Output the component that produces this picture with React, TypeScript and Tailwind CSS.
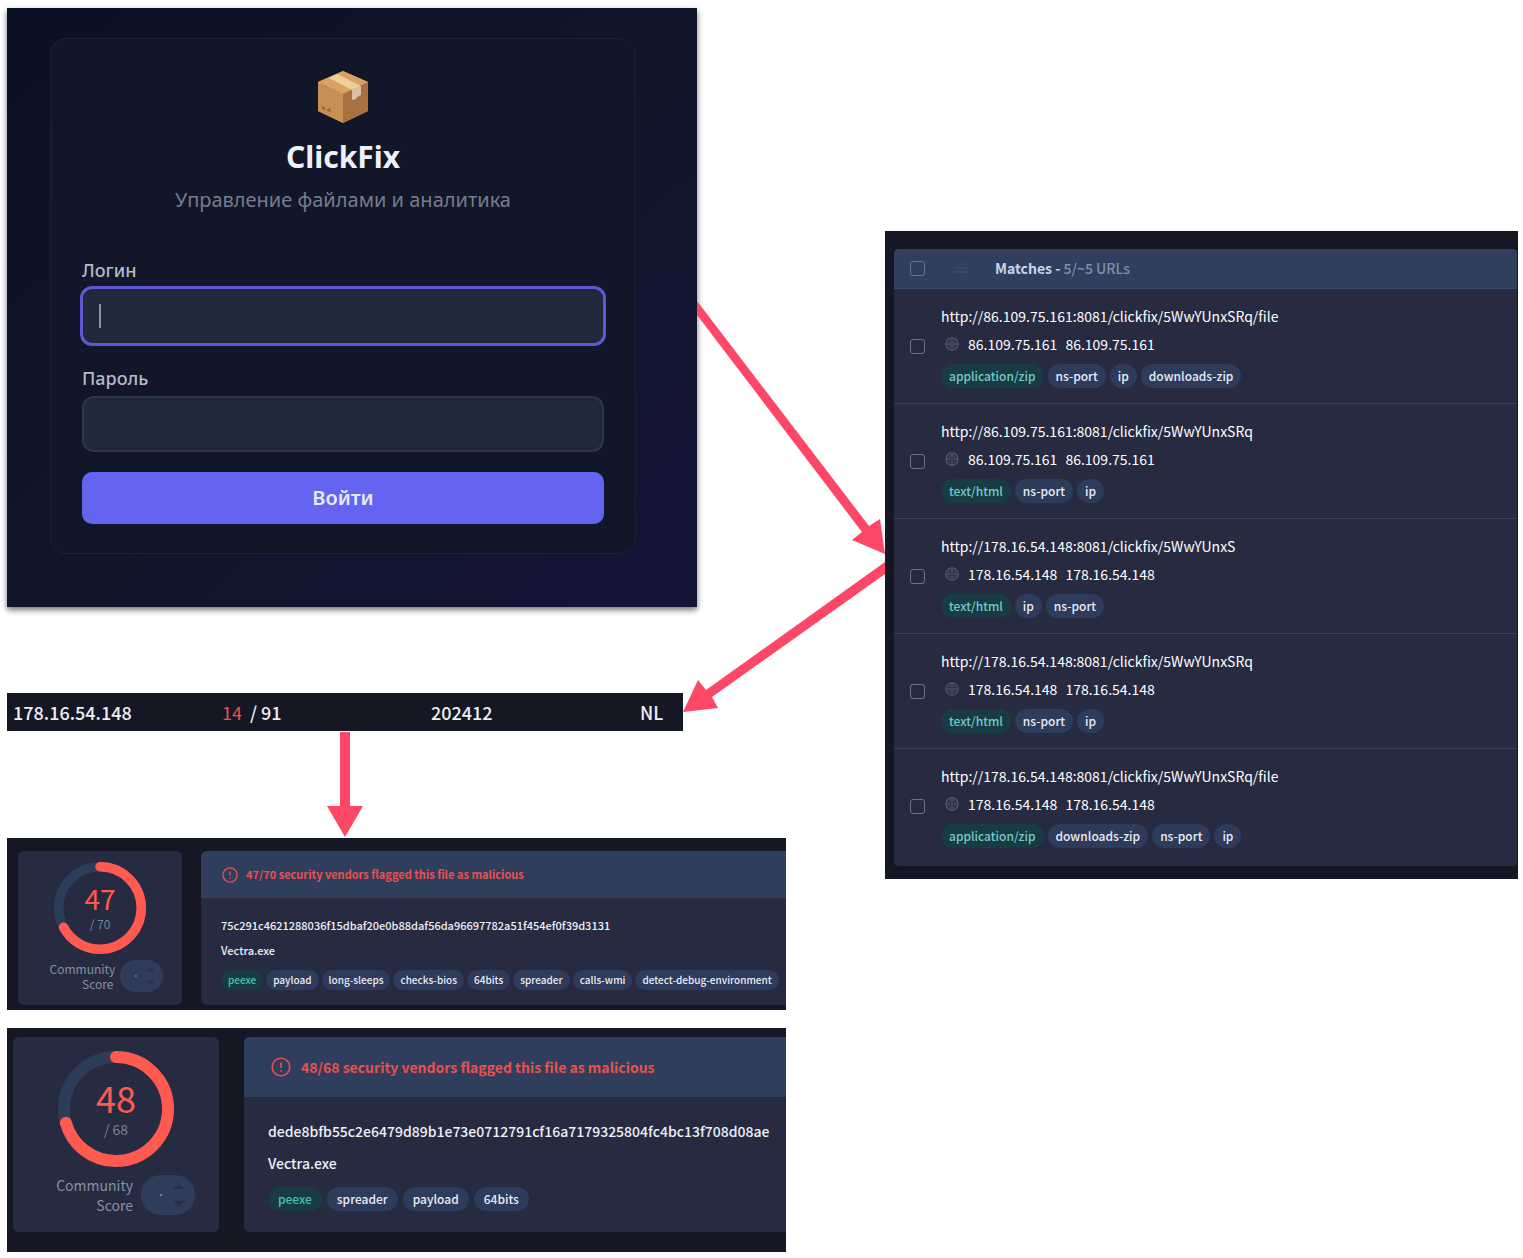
import { useState } from 'react';

interface Match {
  url: string;
  ip: string;
  type: string;
  tags: string[];
}

interface FileReport {
  detections: number;
  total: number;
  hash: string;
  name: string;
  type: string;
  tags: string[];
}

const matches: Match[] = [
  {
    url: 'http://86.109.75.161:8081/clickfix/5WwYUnxSRq/file',
    ip: '86.109.75.161',
    type: 'application/zip',
    tags: ['ns-port', 'ip', 'downloads-zip'],
  },
  {
    url: 'http://86.109.75.161:8081/clickfix/5WwYUnxSRq',
    ip: '86.109.75.161',
    type: 'text/html',
    tags: ['ns-port', 'ip'],
  },
  {
    url: 'http://178.16.54.148:8081/clickfix/5WwYUnxS',
    ip: '178.16.54.148',
    type: 'text/html',
    tags: ['ip', 'ns-port'],
  },
  {
    url: 'http://178.16.54.148:8081/clickfix/5WwYUnxSRq',
    ip: '178.16.54.148',
    type: 'text/html',
    tags: ['ns-port', 'ip'],
  },
  {
    url: 'http://178.16.54.148:8081/clickfix/5WwYUnxSRq/file',
    ip: '178.16.54.148',
    type: 'application/zip',
    tags: ['downloads-zip', 'ns-port', 'ip'],
  },
];

const reports: FileReport[] = [
  {
    detections: 47,
    total: 70,
    hash: '75c291c4621288036f15dbaf20e0b88daf56da96697782a51f454ef0f39d3131',
    name: 'Vectra.exe',
    type: 'peexe',
    tags: ['payload', 'long-sleeps', 'checks-bios', '64bits', 'spreader', 'calls-wmi', 'detect-debug-environment'],
  },
  {
    detections: 48,
    total: 68,
    hash: 'dede8bfb55c2e6479d89b1e73e0712791cf16a7179325804fc4bc13f708d08ae',
    name: 'Vectra.exe',
    type: 'peexe',
    tags: ['spreader', 'payload', '64bits'],
  },
];

function PackageIcon() {
  return (
    <svg viewBox="0 0 52 54" className="h-[54px] w-[52px]" aria-hidden="true">
      <path d="M26 1 51 12v29L26 53 1 41V12Z" fill="#c58b4d" />
      <path d="M26 1 51 12 26 24 1 12Z" fill="#d9a263" />
      <path d="M1 12 26 24v29L1 41Z" fill="#c68f53" />
      <path d="M51 12 26 24v29l25-12Z" fill="#aa7140" />
      <path d="M20 4 12 8l23 12 9-4Z" fill="#f1cf9b" />
      <path d="m35 20 9-4v9l-4 2-1 2-4 1Z" fill="#dcc0a3" />
      <path d="m5 36 3 1.5v3L5 39ZM10 39l3-1 1 4-4-1Z" fill="#96693c" />
    </svg>
  );
}

function LoginPanel() {
  const [login, setLogin] = useState('');
  const [password, setPassword] = useState('');

  return (
    <section className="mr-[89px] bg-linear-to-br from-[#0a1023] via-[#101629] to-[#151438] pt-[30px] pr-[61px] pb-[53px] pl-[43px] font-['Noto_Sans',sans-serif] shadow-[0_3px_6px_rgba(0,0,0,0.55)]">
      <form
        className="flex flex-col rounded-2xl border border-[#1a2234] bg-[#111629] px-[31px] pt-[31px] pb-[29px]"
        onSubmit={(e) => e.preventDefault()}
      >
        <div className="flex flex-col items-center">
          <PackageIcon />
          <h1 className="mt-[15px] text-3xl leading-9 font-bold text-[#eef2f8]">ClickFix</h1>
          <p className="mt-[11px] text-xl leading-7 text-[#747d8f]">Управление файлами и аналитика</p>
        </div>

        <label htmlFor="login" className="mt-11 text-lg leading-6 font-medium text-[#b4bbc9]">
          Логин
        </label>
        <div className="-mx-0.5 mt-1 flex h-[60px] items-center rounded-xl border-3 border-[#5d58d6] bg-[#1f293b] px-4">
          <span className="h-6 w-0.5 bg-[#8b93a3]" />
          <input
            id="login"
            type="text"
            value={login}
            onChange={(e) => setLogin(e.target.value)}
            className="h-full w-full bg-transparent text-lg text-white outline-none"
          />
        </div>

        <label htmlFor="password" className="mt-5 text-lg leading-6 font-medium text-[#b4bbc9]">
          Пароль
        </label>
        <input
          id="password"
          type="password"
          value={password}
          onChange={(e) => setPassword(e.target.value)}
          className="mt-[6px] h-14 rounded-xl border-2 border-[#2c3748] bg-[#1f293b] px-4 text-lg text-white outline-none"
        />

        <button type="submit" className="mt-5 h-[52px] rounded-[10px] bg-[#6464f0] text-xl font-semibold text-[#e6e9ff]">
          Войти
        </button>
      </form>
    </section>
  );
}

function IpRow() {
  return (
    <section className="mr-[103px] bg-[#161724] pl-[6px]">
      <table className="w-full table-fixed text-lg leading-[38px] font-medium text-[#eceef3]">
        <tbody>
          <tr>
            <td className="w-[209px] p-0">178.16.54.148</td>
            <td className="w-[209px] p-0">
              <span className="mr-2 font-normal text-[#f0504d]">14</span>/ 91
            </td>
            <td className="w-[209px] p-0">202412</td>
            <td className="p-0">NL</td>
          </tr>
        </tbody>
      </table>
    </section>
  );
}

function GlobeIcon() {
  return (
    <svg viewBox="0 0 16 16" className="h-4 w-4" fill="none" stroke="#4b5468" aria-hidden="true">
      <circle cx="8" cy="8" r="6" strokeWidth="1.6" />
      <circle cx="8" cy="8" r="3.5" />
      <path d="M2 8h12M8 1v14" />
    </svg>
  );
}

function MatchesPanel() {
  return (
    <section className="bg-[#161725] pt-[18px] pr-px pb-[13px] pl-[9px]">
      <div className="overflow-hidden rounded-sm bg-[#262b41]">
        <header className="flex h-10 items-center border-b border-[#37496a] bg-[#303f5e] pb-px pl-4">
          <input
            type="checkbox"
            aria-label="Select all"
            className="size-[15px] appearance-none rounded-[3px] border border-[#66748f]"
          />
          <svg viewBox="0 0 16 12" className="ml-7 h-3 w-4" fill="none" stroke="#3a4866" aria-hidden="true">
            <path d="M1 10h14M6 6h9M11 2h4" strokeWidth="2" />
          </svg>
          <h2 className="ml-[26px] text-sm leading-5 font-bold text-[#c9d4e8]">
            Matches - <span className="font-medium text-[#7f8fab]">5/~5 URLs</span>
          </h2>
        </header>
        <ul>
          {matches.map((match) => (
            <li
              key={match.url}
              className="flex items-center border-b border-[#33415f] pt-[15px] pb-[15px] pl-4 last:border-0 last:pb-[18px]"
            >
              <input
                type="checkbox"
                aria-label={match.url}
                className="size-[15px] shrink-0 appearance-none rounded-[3px] border border-[#66748f]"
              />
              <div className="ml-4 min-w-0">
                <p className="text-sm leading-6 text-white">{match.url}</p>
                <div className="mt-1 flex items-center gap-2 pl-[3px] text-sm leading-6 text-white">
                  <GlobeIcon />
                  <span>{match.ip}</span>
                  <span>{match.ip}</span>
                </div>
                <div className="mt-2 flex gap-1 text-xs leading-6 font-medium">
                  <span className="rounded-full bg-[#193b43] px-2 text-[#6fcbc8]">{match.type}</span>
                  {match.tags.map((tag) => (
                    <span key={tag} className="rounded-full bg-[#2f3b5a] px-2 text-[#e8edf6]">
                      {tag}
                    </span>
                  ))}
                </div>
              </div>
            </li>
          ))}
        </ul>
      </div>
    </section>
  );
}

function ScoreRing({ detections, total, className }: { detections: number; total: number; className: string }) {
  const length = 2 * Math.PI * 52;
  return (
    <svg viewBox="0 0 116 116" className={className} fill="none" strokeWidth="12" aria-hidden="true">
      <circle cx="58" cy="58" r="52" stroke="#2d3c59" />
      <circle
        cx="58"
        cy="58"
        r="52"
        stroke="#ff5a50"
        strokeLinecap="round"
        strokeDasharray={`${(length * detections) / total} ${length}`}
        transform="rotate(-90 58 58)"
      />
    </svg>
  );
}

function AlertIcon({ className }: { className: string }) {
  return (
    <svg viewBox="0 0 20 20" className={className} fill="none" stroke="#e9504f" strokeWidth="1.6" aria-hidden="true">
      <circle cx="10" cy="10" r="8.8" />
      <path d="M10 5.5v5.5M10 13v1.8" />
    </svg>
  );
}

function VotePill({ className }: { className: string }) {
  return (
    <svg viewBox="0 0 54 40" className={className} aria-hidden="true">
      <rect width="54" height="40" rx="20" fill="#2f3d5b" />
      <circle cx="20" cy="20" r="1.2" fill="#6f7f9f" />
      <path d="m32 14 6-5 6 5ZM32 26l6 5 6-5Z" fill="#263149" />
    </svg>
  );
}

function SmallReport({ report }: { report: FileReport }) {
  return (
    <section className="flex gap-[19px] overflow-hidden bg-[#161724] pt-[13px] pb-[5px] pl-[11px]">
      <div className="flex w-[164px] shrink-0 flex-col items-center rounded-md bg-[#262b41] pt-[11px]">
        <div className="grid place-items-center">
          <ScoreRing detections={report.detections} total={report.total} className="col-start-1 row-start-1 size-[92px]" />
          <div className="col-start-1 row-start-1 text-center">
            <p className="text-[28px] leading-8 text-[#ff5a50]">{report.detections}</p>
            <p className="text-xs leading-5 text-[#77829a]">/ {report.total}</p>
          </div>
        </div>
        <div className="mt-[6px] flex items-center gap-[6px] pl-3">
          <p className="w-16 text-right text-xs leading-[15px] text-[#8490a8]">
            Community
            <br />
            Score
          </p>
          <VotePill className="h-8 w-[43px]" />
        </div>
      </div>
      <div className="min-w-0 flex-1 overflow-hidden rounded-l-md bg-[#262b41]">
        <header className="flex h-[47px] items-center gap-2 bg-[#2f3e5d] pl-[21px] text-[11px] font-bold whitespace-nowrap text-[#e9504f]">
          <AlertIcon className="size-4" />
          {report.detections}/{report.total} security vendors flagged this file as malicious
        </header>
        <div className="pt-[17px] pb-[15px] pl-5 whitespace-nowrap">
          <p className="text-[11px] leading-5 font-medium text-[#eef1f7]">{report.hash}</p>
          <p className="mt-[5px] text-[11px] leading-5 font-medium text-[#eef1f7]">{report.name}</p>
          <div className="mt-[10px] flex gap-[3px] text-[10px] leading-5 font-medium">
            <span className="rounded-full bg-[#193b43] px-[7px] text-[#45c3b0]">{report.type}</span>
            {report.tags.map((tag) => (
              <span key={tag} className="rounded-full bg-[#2f3b5a] px-[7px] text-[#e8edf6]">
                {tag}
              </span>
            ))}
          </div>
        </div>
      </div>
    </section>
  );
}

function LargeReport({ report }: { report: FileReport }) {
  return (
    <section className="flex gap-[25px] overflow-hidden bg-[#161724] pt-[9px] pb-5 pl-[6px]">
      <div className="flex w-[206px] shrink-0 flex-col items-center rounded-md bg-[#262b41] pt-[14px]">
        <div className="grid place-items-center">
          <ScoreRing detections={report.detections} total={report.total} className="col-start-1 row-start-1 size-[116px]" />
          <div className="col-start-1 row-start-1 text-center">
            <p className="text-4xl leading-10 text-[#ff5a50]">{report.detections}</p>
            <p className="text-sm leading-6 text-[#77829a]">/ {report.total}</p>
          </div>
        </div>
        <div className="mt-2 flex items-center gap-2 pl-4">
          <p className="w-20 text-right text-sm leading-5 text-[#8490a8]">
            Community
            <br />
            Score
          </p>
          <VotePill className="h-10 w-[54px]" />
        </div>
      </div>
      <div className="min-w-0 flex-1 overflow-hidden rounded-l-md bg-[#262b41]">
        <header className="flex h-[60px] items-center gap-[10px] bg-[#2f3e5d] pl-[27px] text-sm font-bold whitespace-nowrap text-[#e9504f]">
          <AlertIcon className="size-5" />
          {report.detections}/{report.total} security vendors flagged this file as malicious
        </header>
        <div className="pt-[22px] pb-[21px] pl-6 whitespace-nowrap">
          <p className="text-sm leading-6 font-medium text-[#eef1f7]">{report.hash}</p>
          <p className="mt-2 text-sm leading-6 font-medium text-[#eef1f7]">{report.name}</p>
          <div className="mt-3 flex gap-[5px] text-xs leading-6 font-medium">
            <span className="rounded-full bg-[#193b43] px-[10px] text-[#45c3b0]">{report.type}</span>
            {report.tags.map((tag) => (
              <span key={tag} className="rounded-full bg-[#2f3b5a] px-[10px] text-[#e8edf6]">
                {tag}
              </span>
            ))}
          </div>
        </div>
      </div>
    </section>
  );
}

function Arrows() {
  return (
    <svg
      viewBox="0 0 1523 1258"
      preserveAspectRatio="none"
      className="pointer-events-none absolute inset-0 h-full w-full"
      fill="#fc4767"
      aria-hidden="true"
    >
      <path d="M697 301 869 526l11-7 5 35-33-14 10-8L697 315Z" />
      <path d="M885 562v12L712 697l6 11-35 4 15-32 8 10Z" />
      <path d="M340 732h10v74h13l-18 31-18-31h13Z" />
    </svg>
  );
}

export default function App() {
  return (
    <main className="relative bg-white pt-2 pr-[5px] pb-[6px] pl-[7px] font-['Noto_Sans_CJK_SC',sans-serif]">
      <div className="grid grid-cols-[779fr_633fr] items-start gap-x-[99px]">
        <div className="flex min-w-0 flex-col">
          <LoginPanel />
          <div className="mt-[86px]">
            <IpRow />
          </div>
          <div className="mt-[107px]">
            <SmallReport report={reports[0]} />
          </div>
          <div className="mt-[18px]">
            <LargeReport report={reports[1]} />
          </div>
        </div>
        <div className="mt-[223px] min-w-0">
          <MatchesPanel />
        </div>
      </div>
      <Arrows />
    </main>
  );
}
